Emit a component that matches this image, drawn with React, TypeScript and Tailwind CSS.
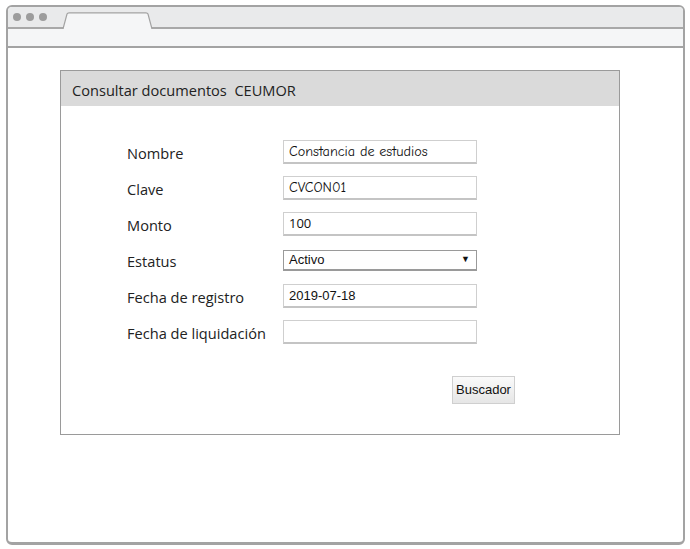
import React from "react";

const labelFont = "font-['Open_Sans',sans-serif]";

const Field = ({ label, children }: { label: string; children: React.ReactNode }) => (
  <div className="flex h-[36px] items-center">
    <div className={`w-[156px] text-[14.6px] text-[#222] ${labelFont} pt-[3px]`}>{label}</div>
    {children}
  </div>
);

const TextBox = ({ value, comic }: { value?: string; comic?: boolean }) => (
  <div
    className={`flex h-[24px] w-[194px] items-center border border-[#cfcfcf] border-b-[2px] border-b-[#c4c4c4] bg-white px-[5px] text-[#111] ${
      comic ? "font-['Comic_Sans_MS','Comic_Neue',cursive] text-[14.2px]" : "font-['Open_Sans',sans-serif] text-[13px]"
    }`}
  >
    {value}
  </div>
);

export default function App() {
  return (
    <div className="h-[549px] w-[690px] bg-white pl-[6px] pt-[5px]">
      <div className="flex h-[540px] w-[679px] flex-col overflow-hidden rounded-[6px] border-[2px] border-[#a3a3a3] border-b-[3px] bg-white">
        {/* title bar */}
        <div className="relative flex h-[22px] items-center gap-[5px] border-b-[2px] border-[#a8a8a8] bg-[#e9eaeb] pl-[5px]">
          <span className="h-[8px] w-[8px] rounded-full bg-[#9c9c9c]" />
          <span className="h-[8px] w-[8px] rounded-full bg-[#9c9c9c]" />
          <span className="h-[8px] w-[8px] rounded-full bg-[#9c9c9c]" />
          <svg className="absolute bottom-[-2px] left-[54px]" width="92" height="17" viewBox="0 0 92 17">
            <path d="M1 17 L5 2 Q5.5 0.8 7 0.8 L84 0.8 Q85.5 0.8 86 2 L90 17" fill="#f5f6f7" stroke="#a3a3a3" strokeWidth="1.2" />
          </svg>
        </div>
        {/* address bar */}
        <div className="h-[19px] border-b-[2px] border-[#a3a3a3] bg-[#f5f6f7]" />
        {/* content */}
        <div className="pl-[52px] pt-[22px]">
          <div className="w-[560px] border border-[#9a9a9a]">
            <div className={`flex h-[35px] items-center bg-[#dadada] pl-[11px] pt-[5px] text-[14.6px] text-[#222] ${labelFont}`}>
              <span className="whitespace-pre">Consultar documentos  CEUMOR</span>
            </div>
            <div className="pl-[66px] pt-[28px] pb-[30px]">
              <Field label="Nombre">
                <TextBox value="Constancia de estudios" comic />
              </Field>
              <Field label="Clave">
                <TextBox value="CVCON01" comic />
              </Field>
              <Field label="Monto">
                <TextBox value="100" />
              </Field>
              <Field label="Estatus">
                <div className="mt-[1px] flex h-[21px] w-[194px] items-center justify-between border border-[#9a9a9a] border-b-[2px] bg-white pl-[5px] pr-[6px] font-['Liberation_Sans',Arial,sans-serif] text-[13px] text-[#111]">
                  <span>Activo</span>
                  <span className="text-[9px]">▼</span>
                </div>
              </Field>
              <Field label="Fecha de registro">
                <div className="flex h-[24px] w-[194px] items-center border border-[#cfcfcf] border-b-[2px] border-b-[#c4c4c4] bg-white px-[5px] font-['Liberation_Sans',Arial,sans-serif] text-[13px] text-[#111]">
                  2019-07-18
                </div>
              </Field>
              <Field label="Fecha de liquidación">
                <TextBox />
              </Field>
              <div className="pl-[325px] pt-[26px]">
                <button
                  type="button"
                  className="h-[28px] w-[63px] border border-[#cfcfcf] bg-gradient-to-b from-[#fafafa] to-[#e6e6e6] font-['Liberation_Sans',Arial,sans-serif] text-[13px] text-[#111]"
                >
                  Buscador
                </button>
              </div>
            </div>
          </div>
        </div>
      </div>
    </div>
  );
}
